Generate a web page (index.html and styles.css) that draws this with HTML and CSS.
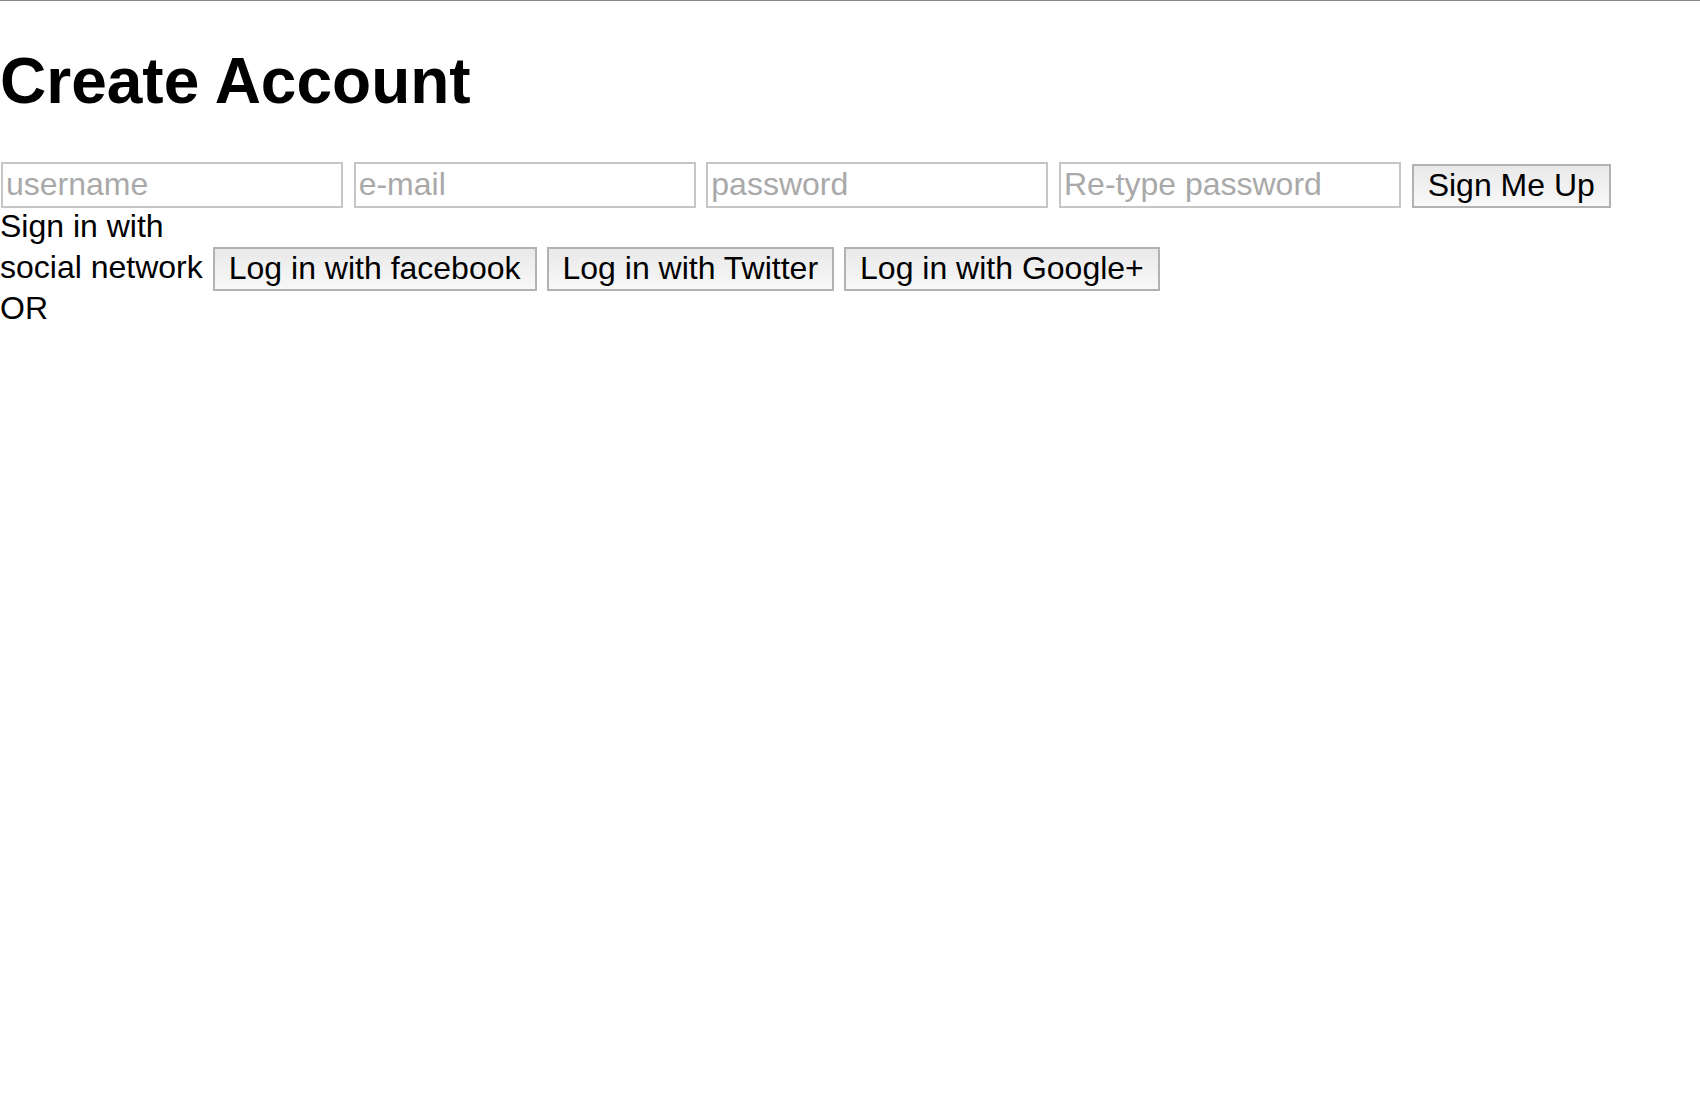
FILE: index.html
```html
<!DOCTYPE html>
<html lang="en">
<head>
<meta charset="utf-8">
<title>Create Account</title>
<link rel="stylesheet" href="styles.css">
</head>
<body>
  <h1 class="title">Create Account</h1>
  <form class="signup-row" onsubmit="return false">
    <input class="field" type="text" placeholder="username">
    <input class="field" type="email" placeholder="e-mail">
    <input class="field" type="password" placeholder="password">
    <input class="field" type="password" placeholder="Re-type password">
    <button class="btn btn-signup" type="submit">Sign Me Up</button>
  </form>
  <div class="text-line">Sign in with</div>
  <div class="social-row">
    <span class="social-label">social network</span>
    <button class="btn" type="button">Log in with facebook</button>
    <button class="btn" type="button">Log in with Twitter</button>
    <button class="btn" type="button">Log in with Google+</button>
  </div>
  <div class="text-line">OR</div>
</body>
</html>
```
FILE: styles.css
```css
html, body {
  background: #ffffff;
}
body {
  margin: 0;
  border-top: 1px solid #8a8a8a;
  font-family: "Liberation Sans", Arial, Helvetica, sans-serif;
  font-size: 32px;
  color: #000000;
}
.title {
  margin: 43px 0 44px;
  font-size: 64px;
  font-weight: bold;
  line-height: 74px;
}
.signup-row {
  display: flex;
  align-items: flex-start;
  gap: 10.67px;
  margin: 0 0 -2px;
  padding-left: 1px;
  height: 46px;
}
.field {
  box-sizing: border-box;
  width: 342px;
  height: 46px;
  margin: 0;
  padding: 3px 3px 4px;
  border: 2px solid #c6c6c6;
  border-radius: 0;
  font-family: inherit;
  font-size: 32px;
  line-height: 37px;
  color: #000;
  background: #fff;
  outline: none;
}
.field::placeholder {
  color: #a9a9a9;
  opacity: 1;
}
.btn {
  box-sizing: border-box;
  height: 44px;
  margin: 0;
  padding: 0 14px 3px;
  border: 2px solid #b2b2b2;
  border-radius: 0;
  background: linear-gradient(to bottom, #e9e9e9, #f8f8f8);
  font-family: inherit;
  font-size: 32px;
  line-height: 36px;
  color: #000;
  white-space: nowrap;
}
.btn-signup {
  margin-top: 2px;
}
.text-line {
  line-height: 41px;
  height: 41px;
}
.social-row {
  display: flex;
  align-items: flex-start;
  gap: 10px;
  height: 41px;
  line-height: 41px;
}
.social-label {
  white-space: nowrap;
}
```
